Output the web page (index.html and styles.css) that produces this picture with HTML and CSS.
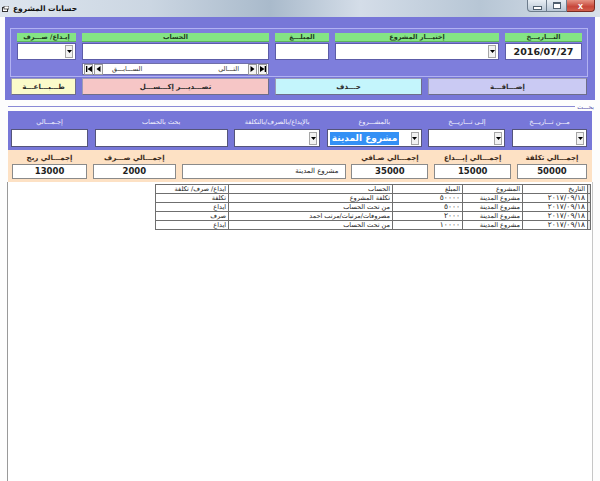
FILE: index.html
```html
<!DOCTYPE html>
<html lang="ar">
  <head>
    <meta charset="UTF-8" />
    <meta name="viewport" content="width=device-width, initial-scale=1.0" />
    <title>حسابات المشروع</title>
    <link rel="stylesheet" href="styles.css">
  </head>
  <body>
    <div class="titlebar">
      <svg class="app-icon" width="7" height="6" viewBox="0 0 7 6">
        <rect x="0.5" y="1.5" width="5" height="4" fill="#fff" stroke="#333" stroke-width="1"/>
        <rect x="2" y="0" width="5" height="3" fill="#fff" stroke="#333" stroke-width="0.8"/>
      </svg>
      <span class="title">حسابات المشروع</span>
      <div class="controls">
        <span class="ctl ctl-min"><i></i></span>
        <span class="ctl ctl-max"><b></b></span>
        <span class="ctl ctl-close">x</span>
      </div>
    </div>

    <div class="client" dir="rtl">
      <!-- ادخال البيانات -->
      <section class="entry-panel">
        <div class="entry-frame">
          <div class="field w-date">
            <div class="lbl">التـــاريـــخ</div>
            <div class="box date">2016/07/27</div>
          </div>
          <div class="field w-project">
            <div class="lbl">إختيـــار المشروع</div>
            <div class="box combo">
              <span class="arrow"><svg width="5" height="3" viewBox="0 0 5 3"><path d="M0 0h5L2.5 3z" fill="#000"/></svg></span>
            </div>
          </div>
          <div class="field w-amount">
            <div class="lbl">المبلـــغ</div>
            <div class="box"></div>
          </div>
          <div class="field w-account">
            <div class="lbl">الحساب</div>
            <div class="box"></div>
            <div class="nav" dir="ltr">
              <span class="nav-btn"><svg width="6" height="6" viewBox="0 0 6 6"><path d="M0 0h1.3v6H0zM6 0v6L1.5 3z" fill="#000"/></svg></span>
              <span class="nav-btn"><svg width="5" height="6" viewBox="0 0 5 6"><path d="M4.5 0v6L0.5 3z" fill="#000"/></svg></span>
              <span class="nav-text prev">الســـابـــق</span>
              <span class="nav-text next">التـــالي</span>
              <span class="nav-btn"><svg width="5" height="6" viewBox="0 0 5 6"><path d="M0.5 0v6L4.5 3z" fill="#000"/></svg></span>
              <span class="nav-btn"><svg width="6" height="6" viewBox="0 0 6 6"><path d="M0 0v6L4.5 3zM4.7 0H6v6H4.7z" fill="#000"/></svg></span>
            </div>
          </div>
          <div class="field w-type">
            <div class="lbl">إيـداع/ صـــرف</div>
            <div class="box combo">
              <span class="arrow"><svg width="5" height="3" viewBox="0 0 5 3"><path d="M0 0h5L2.5 3z" fill="#000"/></svg></span>
            </div>
          </div>
        </div>
        <div class="actions">
          <button class="btn btn-add">إضـــافـــة</button>
          <button class="btn btn-delete">حـــذف</button>
          <button class="btn btn-excel">تصـــديـــر إكـــســـل</button>
          <button class="btn btn-print">طـــبـــاعـــة</button>
        </div>
      </section>

      <!-- البحث -->
      <div class="search-caption">
        <span>بحـــث</span>
        <i class="rule"></i>
      </div>
      <section class="search-panel">
        <div class="sfield s-from">
          <div class="slbl">مـــن تـــاريـــخ</div>
          <div class="box combo tall"><span class="arrow"><svg width="5" height="3" viewBox="0 0 5 3"><path d="M0 0h5L2.5 3z" fill="#000"/></svg></span></div>
        </div>
        <div class="sfield s-to">
          <div class="slbl">إلـى تـــاريـــخ</div>
          <div class="box combo tall"><span class="arrow"><svg width="5" height="3" viewBox="0 0 5 3"><path d="M0 0h5L2.5 3z" fill="#000"/></svg></span></div>
        </div>
        <div class="sfield s-project">
          <div class="slbl">بالمشـــروع</div>
          <div class="box combo tall">
            <span class="arrow"><svg width="5" height="3" viewBox="0 0 5 3"><path d="M0 0h5L2.5 3z" fill="#000"/></svg></span>
            <span class="selected">مشروع المدينة</span>
          </div>
        </div>
        <div class="sfield s-kind">
          <div class="slbl">بالإيداع/بالصرف/بالتكلفة</div>
          <div class="box combo tall"><span class="arrow"><svg width="5" height="3" viewBox="0 0 5 3"><path d="M0 0h5L2.5 3z" fill="#000"/></svg></span></div>
        </div>
        <div class="sfield s-account">
          <div class="slbl">بحث بالحساب</div>
          <div class="box tall"></div>
        </div>
        <div class="sfield s-total">
          <div class="slbl">إجـمـــالي</div>
          <div class="box tall"></div>
        </div>
      </section>

      <!-- الاجماليات -->
      <section class="totals-panel">
        <div class="tfield t-cost">
          <div class="tlbl">إجمـــالي تكلفة</div>
          <div class="tbox">50000</div>
        </div>
        <div class="tfield t-deposit">
          <div class="tlbl">إجمـــالي إيـــداع</div>
          <div class="tbox">15000</div>
        </div>
        <div class="tfield t-net">
          <div class="tlbl">إجمـــالي صـافي</div>
          <div class="tbox">35000</div>
        </div>
        <div class="tfield t-name">
          <div class="tlbl"></div>
          <div class="tbox name">مشروع المدينة</div>
        </div>
        <div class="tfield t-spend">
          <div class="tlbl">إجمـــالي صـــرف</div>
          <div class="tbox">2000</div>
        </div>
        <div class="tfield t-profit">
          <div class="tlbl">إجمـــالي ربح</div>
          <div class="tbox">13000</div>
        </div>
      </section>

      <div class="grid-pane">
        <table class="grid">
          <colgroup>
            <col class="c-sel"><col class="c-date"><col class="c-proj"><col class="c-amt"><col class="c-acc"><col class="c-type">
          </colgroup>
          <tr>
            <td class="sel"></td><td>التاريخ</td><td>المشروع</td><td>المبلغ</td><td>الحساب</td><td>ايداع/ صرف/ تكلفة</td>
          </tr>
          <tr>
            <td class="sel"></td><td class="num">٢٠١٧/٠٩/١٨</td><td>مشروع المدينة</td><td class="num">٥٠٠٠٠</td><td>تكلفة المشروع</td><td>تكلفة</td>
          </tr>
          <tr>
            <td class="sel"></td><td class="num">٢٠١٧/٠٩/١٨</td><td>مشروع المدينة</td><td class="num">٥٠٠٠</td><td>من تحت الحساب</td><td>ايداع</td>
          </tr>
          <tr>
            <td class="sel"></td><td class="num">٢٠١٧/٠٩/١٨</td><td>مشروع المدينة</td><td class="num">٢٠٠٠</td><td>مصروفات/مرتبات/مرتب احمد</td><td>صرف</td>
          </tr>
          <tr>
            <td class="sel"></td><td class="num">٢٠١٧/٠٩/١٨</td><td>مشروع المدينة</td><td class="num">١٠٠٠٠</td><td>من تحت الحساب</td><td>ايداع</td>
          </tr>
        </table>
      </div>
    </div>
  </body>
</html>
```

FILE: styles.css
```css
body {
  margin: 0;
  width: 600px;
  height: 481px;
  overflow: hidden;
  background: #f3f5f8;
  font-family: "DejaVu Sans", sans-serif;
  color: #222;
}

/* شريط العنوان */
.titlebar {
  height: 17px;
  display: flex;
  align-items: center;
  background: linear-gradient(90deg, #dde5ee 0%, #cbd6e2 25%, #a9bacb 45%, #d4dde8 60%, #b7c6d5 80%, #d9e1ea 100%);
}

.app-icon {
  margin-left: 2px;
}

.title {
  font-size: 7.5px;
  font-weight: bold;
  margin-left: 4px;
  color: #111;
}

.controls {
  margin-left: auto;
  margin-right: 5px;
  align-self: flex-start;
  display: flex;
}

.ctl {
  height: 12px;
  display: flex;
  align-items: center;
  justify-content: center;
  box-sizing: border-box;
  border: 1px solid #6d7c8c;
  border-top: none;
}

.ctl-min,
.ctl-max {
  width: 20px;
  background: linear-gradient(#e8eef4, #b9c7d5);
}

.ctl-min {
  border-radius: 0 0 0 4px;
}

.ctl-min i {
  width: 7px;
  height: 2px;
  background: #fff;
  border: 1px solid #50606f;
  margin-top: 4px;
}

.ctl-max {
  border-left: none;
}

.ctl-max b {
  width: 6px;
  height: 4px;
  border: 1px solid #50606f;
  border-top-width: 2px;
  background: #fff;
}

.ctl-close {
  width: 28px;
  border-left: none;
  border-radius: 0 0 4px 0;
  background: linear-gradient(#e59384, #c7473a 60%, #d1604e);
  color: #fff;
  font-size: 9px;
  font-weight: bold;
  font-family: "Liberation Sans", sans-serif;
  border-color: #7a2b22;
}

/* منطقة النموذج */
.client {
  height: 464px;
  display: flex;
  flex-direction: column;
  padding: 0 5px;
  background: #fdfdfd;
}

.entry-panel {
  background: #7777d8;
  padding: 11px 7px 5px 5px;
}

.entry-frame {
  display: flex;
  gap: 6px;
  align-items: flex-start;
  border: 1px solid #b2b2f2;
  background: #7e7edc;
  padding: 4px 5px 1px 6px;
  height: 42px;
}

.field {
  display: flex;
  flex-direction: column;
}

.w-date { width: 77px; }
.w-project { width: 164px; }
.w-amount { width: 54px; }
.w-account { width: 187px; }
.w-type { width: 59px; }

.lbl {
  height: 9px;
  line-height: 9px;
  background: #84e484;
  font-size: 6.5px;
  font-weight: bold;
  color: #1d3d1d;
  text-align: center;
  border-bottom: 1px solid #5bb35b;
  box-sizing: border-box;
}

.box {
  height: 17px;
  margin-top: 1px;
  background: #fff;
  border: 1px solid #5c5ca8;
  box-sizing: border-box;
}

.box.tall {
  height: 18px;
  margin-top: 0;
  border-color: #55557a;
}

.date {
  direction: ltr;
  font-size: 9.5px;
  font-weight: bold;
  text-align: center;
  line-height: 15px;
  color: #222;
}

.combo {
  display: flex;
  align-items: center;
  padding: 0 2px;
}

.arrow {
  width: 6px;
  height: 11px;
  border: 1px solid #a6a6a6;
  background: #f2f2f2;
  display: flex;
  align-items: center;
  justify-content: center;
}

.nav {
  margin-top: 3px;
  height: 12px;
  box-sizing: border-box;
  background: #fff;
  border: 1px solid #7070a8;
  display: flex;
  align-items: center;
  padding: 0 1px;
  gap: 1px;
}

.nav-btn {
  width: 7px;
  height: 9px;
  border: 1px solid #9a9a9a;
  background: #f4f4f4;
  display: flex;
  align-items: center;
  justify-content: center;
}

.nav-text {
  font-size: 6.5px;
  color: #333;
}

.nav-text.prev {
  margin-left: 8px;
}

.nav-text.next {
  margin-left: auto;
  margin-right: 8px;
}

.actions {
  display: flex;
  gap: 6px;
  margin: 1px 1px 0 1px;
  height: 17px;
}

.btn {
  height: 17px;
  padding: 0;
  font-family: "DejaVu Sans", sans-serif;
  font-size: 7px;
  font-weight: bold;
  color: #2a2a2a;
  border: 1px solid #9b9bb5;
  border-right-color: #6d6d8a;
  border-bottom-color: #6d6d8a;
}

.btn-add { width: 159px; background: #cacaf3; }
.btn-delete { width: 147px; background: #c4f5fc; }
.btn-excel { width: 187px; background: #f6c6c6; }
.btn-print { width: 65px; background: #fbfbca; }

/* البحث */
.search-caption {
  display: flex;
  align-items: center;
  height: 9px;
  margin: 2px 0 0 3px;
}

.search-caption span {
  font-size: 6px;
  color: #5050a8;
  padding: 0 1px 0 2px;
}

.search-caption .rule {
  flex: 1;
  height: 1px;
  background: #8a8ad6;
}

.search-panel {
  margin: 0 3px;
  background: #7777d8;
  padding: 7px 5px 3px 3px;
  display: flex;
  justify-content: space-between;
}

.sfield {
  display: flex;
  flex-direction: column;
}

.s-from { width: 75px; }
.s-to { width: 77px; }
.s-project { width: 95px; }
.s-kind { width: 86px; }
.s-account { width: 133px; }
.s-total { width: 77px; }

.slbl {
  height: 9px;
  line-height: 9px;
  margin-bottom: 2px;
  font-size: 6.5px;
  color: #f4f4ff;
  text-align: center;
  white-space: nowrap;
}

.selected {
  margin-right: auto;
  background: #3390f5;
  color: #fff;
  font-size: 9px;
  font-weight: bold;
  line-height: 13px;
  padding: 0 2px;
}

/* الاجماليات */
.totals-panel {
  margin: 0 3px;
  background: #fde1c4;
  padding: 4px 5px 3px 4px;
  display: flex;
  justify-content: space-between;
}

.tfield {
  display: flex;
  flex-direction: column;
}

.t-cost { width: 70px; }
.t-deposit { width: 77px; }
.t-net { width: 77px; }
.t-name { width: 164px; }
.t-spend { width: 83px; }
.t-profit { width: 75px; }

.tlbl {
  height: 9px;
  line-height: 9px;
  margin-bottom: 1px;
  font-size: 7px;
  font-weight: bold;
  color: #3a2a1a;
  text-align: center;
  white-space: nowrap;
}

.tbox {
  height: 15px;
  box-sizing: border-box;
  background: #fff;
  border: 1px solid #8a8a8a;
  font-size: 8.5px;
  font-weight: bold;
  line-height: 13px;
  text-align: center;
  color: #1e1e1e;
}

.tbox.name {
  text-align: right;
  padding-right: 6px;
  font-size: 7px;
  font-weight: normal;
}

/* الجدول */
.grid-pane {
  flex: 1;
  margin: 0 2px;
  background: #fff;
  border-left: 1px solid #999;
  border-right: 1px solid #c6c6c6;
  padding-top: 2px;
}

.grid {
  border-collapse: collapse;
  table-layout: fixed;
  width: 435px;
  margin-right: 1px;
  font-size: 6.5px;
  color: #1a1a1a;
}

.grid td {
  height: 8px;
  line-height: 8px;
  padding: 0 2px;
  border: 1px solid #6f6f6f;
  text-align: right;
  white-space: nowrap;
}

.grid td.num {
  font-size: 7.5px;
  letter-spacing: 0.6px;
}

.grid td.sel {
  padding: 0;
  background: #e6e6e6;
}

.c-sel { width: 3px; }
.c-date { width: 65px; }
.c-proj { width: 60px; }
.c-amt { width: 70px; }
.c-acc { width: 164px; }
.c-type { width: 73px; }
```
